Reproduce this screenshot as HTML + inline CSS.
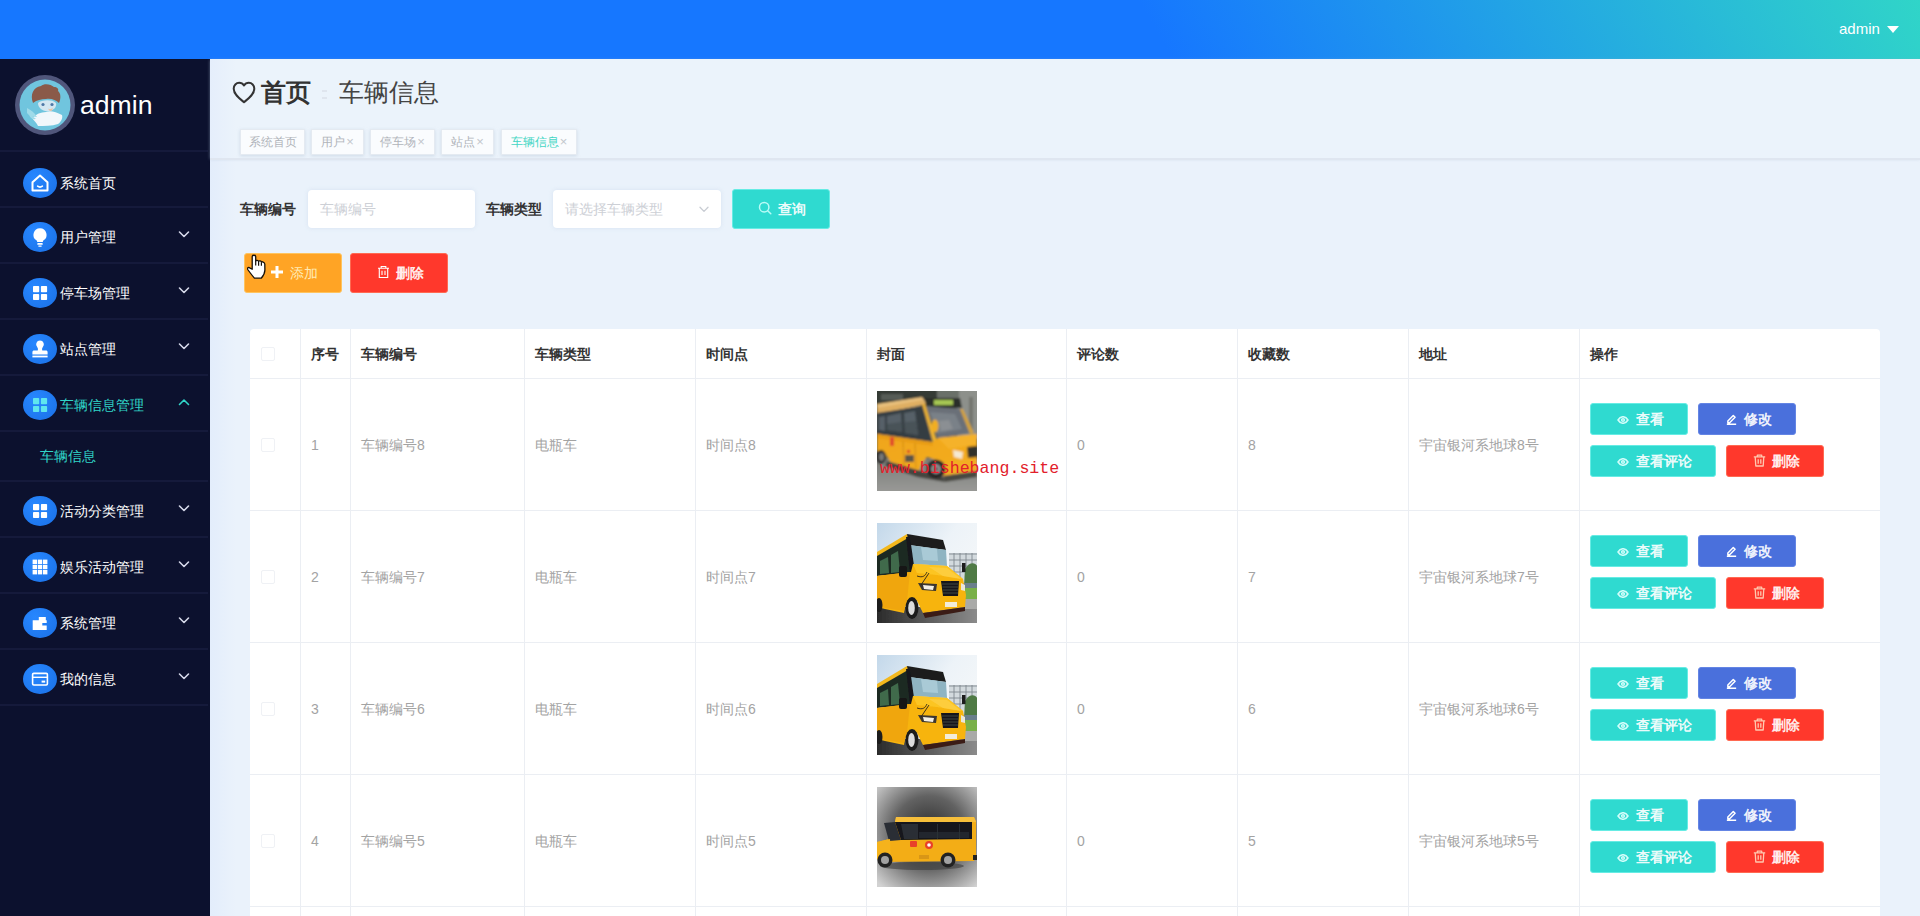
<!DOCTYPE html>
<html lang="zh">
<head>
<meta charset="utf-8">
<title>车辆信息</title>
<style>
*{box-sizing:border-box;margin:0;padding:0}
html,body{width:1920px;height:916px;overflow:hidden}
body{position:relative;background:linear-gradient(90deg,#e3edfb 210px,#eaf2fb 236px);font-family:"Liberation Sans",sans-serif;font-size:14px;color:#333}
.abs{position:absolute}
#header{position:absolute;left:0;top:0;width:1920px;height:59px;background:linear-gradient(60deg,#1677ff 0%,#1677ff 60%,#30d5c8 100%)}
#header .user{position:absolute;left:1839px;top:19px;font-size:15px;color:#fff;line-height:20px}
#header .caret{position:absolute;left:1887px;top:26px;width:0;height:0;border-left:6px solid transparent;border-right:6px solid transparent;border-top:7px solid #fff}
#side{position:absolute;left:0;top:59px;width:210px;height:857px;background:#0c112e;color:#fff}
#side .avatar{position:absolute;left:15px;top:16px;width:60px;height:60px;border-radius:50%;background:#50567b;overflow:hidden}
#side .name{position:absolute;left:80px;top:29px;font-size:26.6px;line-height:34px;color:#fff}
#side .sep{position:absolute;left:0;width:208px;height:2px;background:#151a3b}
#side .item{position:absolute;left:0;width:210px;height:34px}
#side .ico{position:absolute;left:23px;top:2px;width:34px;height:30px;border-radius:50%;background:radial-gradient(circle at 35% 30%,#2787ff,#1a70e6)}
#side .ico svg{position:absolute;left:0;top:-2px}
#side .txt{position:absolute;left:60px;top:7px;font-size:14px;line-height:20px;color:#fff;white-space:nowrap}
#side .chev{position:absolute;left:178px;top:10px}
#side .on .txt{color:#30d5c8}
#side .sub{position:absolute;left:40px;font-size:14px;line-height:20px;color:#30d5c8}
#top{position:absolute;left:210px;top:59px;width:1710px;height:99px;background:linear-gradient(90deg,#e5eefb 0,#ebf3fb 26px);box-shadow:0 1px 3px rgba(170,185,210,.55)}
#crumb{position:absolute;left:232px;top:74px;height:36px;white-space:nowrap}
#crumb .heart{position:absolute;left:0;top:7px}
#crumb .b1{position:absolute;left:29px;top:0;font-size:25px;font-weight:bold;line-height:36px;color:#333}
#crumb .bsep{position:absolute;left:90px;top:16px;width:5px;height:9px;border-top:2px solid #dfe5ee;border-bottom:2px solid #dfe5ee}
#crumb .b2{position:absolute;left:107px;top:0;font-size:25.4px;line-height:36px;color:#444}
#tabs .tab{position:absolute;top:129px;height:26px;background:#fafcfe;border:1px solid #e4eaf1;font-size:12px;line-height:24px;color:#b0b4ba;text-align:center;white-space:nowrap;box-shadow:0 1px 3px rgba(180,195,215,.5)}
#tabs .tab.on{color:#45d6c4}
#tabs .x{font-size:13px;margin-left:1px;color:#c3c7cd}
#tabline{position:absolute;left:210px;top:158px;width:1710px;height:2px;background:#dfe6f0}
.lbl{position:absolute;top:199px;font-size:14px;font-weight:bold;line-height:20px;color:#333}
.inp{position:absolute;top:190px;height:38px;background:#fff;border-radius:4px;font-size:14px;line-height:38px;color:#cdd0d6;padding-left:12px;box-shadow:0 0 4px rgba(200,215,235,.6)}
.btn{position:absolute;color:#fff;font-size:14px;font-weight:700;text-align:center;border-radius:3px;white-space:nowrap;padding-left:2px}
.btn .bi{display:inline-block;vertical-align:middle;margin-right:6px;position:relative;top:-2px}
.btn span{vertical-align:middle;position:relative;top:-1.5px;color:rgba(255,255,255,.93)}
.btn.org span{color:#ffebb5;font-weight:400}
.teal{background:#2fdad0;border:1px solid #66ece4}
.blue{background:#4a70dc;border:1px solid #6485e4}
.red{background:#ff382c;border:1px solid #ff6a52}
.org{background:#ffa425;border:1px solid #ffc45e}
#tbl{position:absolute;left:250px;top:329px;width:1630px;height:587px;background:#fff;border-top-left-radius:4px;border-top-right-radius:4px}
#tbl .v{position:absolute;top:0;width:1px;height:587px;background:#ebeef3}
#tbl .h{position:absolute;left:0;width:1630px;height:1px;background:#ebeef3}
#tbl .th{position:absolute;top:15px;font-size:14px;font-weight:bold;line-height:20px;color:#333;white-space:nowrap}
#tbl .td{position:absolute;font-size:14px;line-height:20px;color:#a3a3a3;white-space:nowrap}
#tbl .cb{position:absolute;left:11px;width:14px;height:14px;border:1px solid #eff1f5;border-radius:2px;background:#fff}
#tbl .pic{position:absolute;left:627px;width:100px;height:100px;overflow:hidden}
#tbl .pic svg{display:block}
#wm{position:absolute;left:880px;top:459px;font-family:"Liberation Mono",monospace;font-size:16.6px;line-height:20px;color:#e2202b;white-space:nowrap}
#cursor{position:absolute;left:247px;top:254px}
</style>
</head>
<body>
<div id="header"><div class="user">admin</div><div class="caret"></div></div>
<div id="side">
<div class="avatar"><svg width="60" height="60" viewBox="0 0 60 60"><defs><filter id="ba"><feGaussianBlur stdDeviation=".7"/></filter></defs><circle cx="30" cy="30" r="25.5" fill="#70c5de"/><g filter="url(#ba)"><path d="M18 28c-3-8 0-16 8-17 3-3 10-2 13 1 3 0 5 2 4 4 3 2 3 8 1 12-3-3-8-5-13-4-5 0-9 1-13 4z" fill="#8a5a4a"/><path d="M23 28c3-3 14-4 18 0 1 4-2 7-7 8-6 1-11-3-11-8z" fill="#d3e6f1"/><circle cx="28" cy="29.5" r="1.6" fill="#4d77a6"/><circle cx="37" cy="29.5" r="1.6" fill="#4d77a6"/><path d="M33 33.5c2 1 4 .500 5-1l-1 3c-1.5.800-3 .500-4-2z" fill="#e9c2a6"/><path d="M17 43c4-4 9-6 14-6 4-2 10 0 16 3 1 3-1 7-4 9-6 2-14 2-20 2-1-3-4-5-6-8z" fill="#f1f7fb"/><path d="M12 33c4 2 8 5 10 9-4 0-8-1-10-4zM14 40c3 1 5 2 7 4-3 .500-5 0-7-4z" fill="#9fdbe9"/></g></svg>
</div>
<div class="name">admin</div>
<div class="sep" style="top:91px"></div>
<div class="sep" style="top:147px"></div>
<div class="sep" style="top:203px"></div>
<div class="sep" style="top:259px"></div>
<div class="sep" style="top:315px"></div>
<div class="sep" style="top:371px"></div>
<div class="sep" style="top:421px"></div>
<div class="sep" style="top:477px"></div>
<div class="sep" style="top:533px"></div>
<div class="sep" style="top:589px"></div>
<div class="sep" style="top:645px"></div>
<div class="item" style="top:107px"><div class="ico"><svg width="34" height="34" viewBox="0 0 34 34"><path d="M9.5 16.2 L17 9.6 L24.5 16.2 V24.6 H9.5 Z" fill="none" stroke="#fff" stroke-width="2" stroke-linejoin="round"/><path d="M14.6 20.2 Q17 22 19.4 20.2" fill="none" stroke="#fff" stroke-width="1.6" stroke-linecap="round"/></svg></div><div class="txt">系统首页</div></div>
<div class="item" style="top:161px"><div class="ico"><svg width="34" height="34" viewBox="0 0 34 34"><path d="M17 8.2a6.6 6.6 0 0 1 3.6 12.1c-.5.4-.8 1-.8 1.7H14.2c0-.7-.3-1.3-.8-1.7A6.6 6.6 0 0 1 17 8.2z" fill="#fff"/><rect x="14.2" y="23" width="5.6" height="1.8" rx=".9" fill="#fff"/><rect x="15.2" y="25.4" width="3.6" height="1.4" rx=".7" fill="#fff"/></svg></div><div class="txt">用户管理</div><svg class="chev" width="12" height="9" viewBox="0 0 12 9"><path d="M1.5 2 6 6.5 10.5 2" fill="none" stroke="#d6d9ea" stroke-width="1.6" stroke-linecap="round" stroke-linejoin="round"/></svg></div>
<div class="item" style="top:217px"><div class="ico"><svg width="34" height="34" viewBox="0 0 34 34"><rect x="10" y="10" width="6.2" height="6.2" rx=".8" fill="#fff"/><rect x="17.9" y="10" width="6.2" height="6.2" rx=".8" fill="#fff"/><rect x="10" y="17.9" width="6.2" height="6.2" rx=".8" fill="#fff"/><rect x="17.9" y="17.9" width="6.2" height="6.2" rx=".8" fill="#fff"/></svg></div><div class="txt">停车场管理</div><svg class="chev" width="12" height="9" viewBox="0 0 12 9"><path d="M1.5 2 6 6.5 10.5 2" fill="none" stroke="#d6d9ea" stroke-width="1.6" stroke-linecap="round" stroke-linejoin="round"/></svg></div>
<div class="item" style="top:273px"><div class="ico"><svg width="34" height="34" viewBox="0 0 34 34"><path d="M17 8.6a3.9 3.9 0 0 1 2.7 6.7c-.6.7-.8 1.5-.6 2.4l.2.9h3.6c1 0 1.7.7 1.7 1.7v2.1H9.4v-2.1c0-1 .7-1.7 1.7-1.7h3.6l.2-.9c.2-.9 0-1.7-.6-2.4A3.9 3.9 0 0 1 17 8.6z" fill="#fff"/><rect x="9.4" y="23.6" width="15.2" height="1.8" fill="#fff"/></svg></div><div class="txt">站点管理</div><svg class="chev" width="12" height="9" viewBox="0 0 12 9"><path d="M1.5 2 6 6.5 10.5 2" fill="none" stroke="#d6d9ea" stroke-width="1.6" stroke-linecap="round" stroke-linejoin="round"/></svg></div>
<div class="item on" style="top:329px"><div class="ico"><svg width="34" height="34" viewBox="0 0 34 34"><rect x="10" y="10" width="6.2" height="6.2" rx=".8" fill="#5fe6ee"/><rect x="17.9" y="10" width="6.2" height="6.2" rx=".8" fill="#5fe6ee"/><rect x="10" y="17.9" width="6.2" height="6.2" rx=".8" fill="#5fe6ee"/><rect x="17.9" y="17.9" width="6.2" height="6.2" rx=".8" fill="#5fe6ee"/></svg></div><div class="txt">车辆信息管理</div><svg class="chev" width="12" height="9" viewBox="0 0 12 9"><path d="M1.5 6.5 6 2 10.5 6.5" fill="none" stroke="#30d5c8" stroke-width="1.6" stroke-linecap="round" stroke-linejoin="round"/></svg></div>
<div class="item" style="top:435px"><div class="ico"><svg width="34" height="34" viewBox="0 0 34 34"><rect x="10" y="10" width="6.2" height="6.2" rx=".8" fill="#fff"/><rect x="17.9" y="10" width="6.2" height="6.2" rx=".8" fill="#fff"/><rect x="10" y="17.9" width="6.2" height="6.2" rx=".8" fill="#fff"/><rect x="17.9" y="17.9" width="6.2" height="6.2" rx=".8" fill="#fff"/></svg></div><div class="txt">活动分类管理</div><svg class="chev" width="12" height="9" viewBox="0 0 12 9"><path d="M1.5 2 6 6.5 10.5 2" fill="none" stroke="#d6d9ea" stroke-width="1.6" stroke-linecap="round" stroke-linejoin="round"/></svg></div>
<div class="item" style="top:491px"><div class="ico"><svg width="34" height="34" viewBox="0 0 34 34"><rect x="9.6" y="9.6" width="4.4" height="4.4" fill="#fff"/><rect x="9.6" y="14.8" width="4.4" height="4.4" fill="#fff"/><rect x="9.6" y="20" width="4.4" height="4.4" fill="#fff"/><rect x="14.8" y="9.6" width="4.4" height="4.4" fill="#fff"/><rect x="14.8" y="14.8" width="4.4" height="4.4" fill="#fff"/><rect x="14.8" y="20" width="4.4" height="4.4" fill="#fff"/><rect x="20" y="9.6" width="4.4" height="4.4" fill="#fff"/><rect x="20" y="14.8" width="4.4" height="4.4" fill="#fff"/><rect x="20" y="20" width="4.4" height="4.4" fill="#fff"/></svg></div><div class="txt">娱乐活动管理</div><svg class="chev" width="12" height="9" viewBox="0 0 12 9"><path d="M1.5 2 6 6.5 10.5 2" fill="none" stroke="#d6d9ea" stroke-width="1.6" stroke-linecap="round" stroke-linejoin="round"/></svg></div>
<div class="item" style="top:547px"><div class="ico"><svg width="34" height="34" viewBox="0 0 34 34"><path d="M9.7 14.3h6.1v-3.4h7v3.4h.9v2.7h-4.4v2.6h4.4v4.4H9.7z" fill="#fff"/></svg></div><div class="txt">系统管理</div><svg class="chev" width="12" height="9" viewBox="0 0 12 9"><path d="M1.5 2 6 6.5 10.5 2" fill="none" stroke="#d6d9ea" stroke-width="1.6" stroke-linecap="round" stroke-linejoin="round"/></svg></div>
<div class="item" style="top:603px"><div class="ico"><svg width="34" height="34" viewBox="0 0 34 34"><rect x="9.6" y="11.4" width="14.8" height="11.6" rx="1.2" fill="none" stroke="#fff" stroke-width="1.6"/><rect x="9.6" y="14.6" width="14.8" height="1.4" fill="#fff"/><rect x="18.6" y="18.6" width="3.6" height="2" fill="#fff"/></svg></div><div class="txt">我的信息</div><svg class="chev" width="12" height="9" viewBox="0 0 12 9"><path d="M1.5 2 6 6.5 10.5 2" fill="none" stroke="#d6d9ea" stroke-width="1.6" stroke-linecap="round" stroke-linejoin="round"/></svg></div>
<div class="sub" style="top:387px">车辆信息</div>
</div>
<div id="main">
<div id="top"></div>
<div id="crumb"><svg class="heart" width="24" height="23" viewBox="0 0 24 23"><path d="M12 21.2C7.5 17.6 1.7 13.3 1.7 7.7 1.7 4.3 4.2 1.8 7.2 1.8c1.9 0 3.7 1 4.8 2.7 1.1-1.7 2.9-2.7 4.8-2.7 3 0 5.5 2.5 5.5 5.9 0 5.6-5.8 9.9-10.3 13.5z" fill="none" stroke="#333" stroke-width="2" stroke-linejoin="round"/></svg><span class="b1">首页</span><span class="bsep"></span><span class="b2">车辆信息</span></div>
<div id="tabs"><div class="tab" style="left:240px;width:65px">系统首页</div><div class="tab" style="left:311px;width:53px">用户<span class="x">×</span></div><div class="tab" style="left:370px;width:65px">停车场<span class="x">×</span></div><div class="tab" style="left:441px;width:53px">站点<span class="x">×</span></div><div class="tab on" style="left:501px;width:76px">车辆信息<span class="x">×</span></div></div><div id="tabline"></div>
<div class="lbl" style="left:240px">车辆编号</div><div class="inp" style="left:308px;width:167px">车辆编号</div>
<div class="lbl" style="left:486px">车辆类型</div><div class="inp" style="left:553px;width:168px">请选择车辆类型<svg class="abs" style="left:146px;top:16px" width="10" height="7" viewBox="0 0 10 7"><path d="M1 1.2 5 5.4 9 1.2" fill="none" stroke="#c8ccd3" stroke-width="1.3" stroke-linecap="round" stroke-linejoin="round"/></svg></div>
<div class="btn teal" style="left:732px;top:189px;width:98px;height:40px;line-height:38px"><svg class="bi" width="14" height="14" viewBox="0 0 14 14"><circle cx="6.2" cy="6.2" r="4.7" fill="none" stroke="#b9fbf7" stroke-width="1.5"/><path d="M9.7 9.7 12.8 12.8" stroke="#b9fbf7" stroke-width="1.5" stroke-linecap="round"/></svg><span>查询</span></div>
<div class="btn org" style="left:244px;top:253px;width:98px;height:40px;line-height:38px"><svg class="bi" width="14" height="14" viewBox="0 0 14 14"><path d="M7 1v12M1 7h12" stroke="#fff" stroke-width="3"/></svg><span>添加</span></div>
<div class="btn red" style="left:350px;top:253px;width:98px;height:40px;line-height:38px"><svg class="bi" width="13" height="14" viewBox="0 0 13 14"><path d="M1 3.2h11M4.2 3.2V1.5h4.6v1.7M2.3 3.2v9.3h8.4V3.2M5 5.8v4.2M8 5.8v4.2" fill="none" stroke="#fff" stroke-width="1.1"/></svg><span>删除</span></div>
<div id="tbl"><div class="v" style="left:50px"></div><div class="v" style="left:100px"></div><div class="v" style="left:274px"></div><div class="v" style="left:445px"></div><div class="v" style="left:616px"></div><div class="v" style="left:816px"></div><div class="v" style="left:987px"></div><div class="v" style="left:1158px"></div><div class="v" style="left:1329px"></div><div class="h" style="top:49px"></div><div class="h" style="top:181px"></div><div class="h" style="top:313px"></div><div class="h" style="top:445px"></div><div class="h" style="top:577px"></div><div class="cb" style="top:18px"></div><div class="th" style="left:61px">序号</div><div class="th" style="left:111px">车辆编号</div><div class="th" style="left:285px">车辆类型</div><div class="th" style="left:456px">时间点</div><div class="th" style="left:627px">封面</div><div class="th" style="left:827px">评论数</div><div class="th" style="left:998px">收藏数</div><div class="th" style="left:1169px">地址</div><div class="th" style="left:1340px">操作</div><div class="cb" style="top:109px"></div><div class="td" style="left:61px;top:106px">1</div><div class="td" style="left:111px;top:106px">车辆编号8</div><div class="td" style="left:285px;top:106px">电瓶车</div><div class="td" style="left:456px;top:106px">时间点8</div><div class="td" style="left:827px;top:106px">0</div><div class="td" style="left:998px;top:106px">8</div><div class="td" style="left:1169px;top:106px">宇宙银河系地球8号</div><div class="pic" style="top:62px"><svg width="100" height="100" viewBox="0 0 100 100"><defs><linearGradient id="g1" x1="0" y1="0" x2="0" y2="1"><stop offset="0" stop-color="#7b7d79"/><stop offset="1" stop-color="#9a9a98"/></linearGradient><linearGradient id="y1" x1="0" y1="0" x2="1" y2="1"><stop offset="0" stop-color="#f0a51a"/><stop offset="1" stop-color="#f4ae22"/></linearGradient><filter id="b1"><feGaussianBlur stdDeviation=".8"/></filter></defs><rect width="100" height="100" fill="#5a5f59"/><g filter="url(#b1)"><rect x="-2" y="-2" width="64" height="17" fill="#343a35"/><rect x="4" y="3" width="22" height="6" fill="#565c56"/><rect x="80" y="-2" width="22" height="50" fill="#8d908b"/><rect x="60" y="-2" width="22" height="12" fill="#6a6f69"/><rect x="92" y="6" width="4" height="36" fill="#73766f"/><rect x="-2" y="68" width="104" height="34" fill="url(#g1)"/><path d="M0 13 45 6 50 13 0 23z" fill="#e9c07c"/><path d="M0 17 46 9 49 13 0 23z" fill="#dfae62"/><path d="M47 7h36l2 10H50z" fill="#2a2e29"/><rect x="57" y="9" width="19" height="5" fill="#a6c652"/><path d="M0 22 46 15 55 51 0 43z" fill="#363d43"/><path d="M2 26 8 25 8 40 2 39zM10 25 24 22 25 41 10 39zM27 22 38 20 41 44 28 42z" fill="#566067"/><path d="M10 33 24 31 25 41 10 39zM28 31 39 30 41 44 28 42z" fill="#4a5359"/><path d="M49 15 83 18 93 42 61 47z" fill="#6a7078"/><path d="M53 21 78 23 85 38 60 42z" fill="#7a8188"/><path d="M62 30 72 29 76 38 64 40z" fill="#8b8f93"/><path d="M45 13 48 13 60 50 56 51z" fill="#eeb232"/><path d="M83 18 86 18 97 42 93 43z" fill="#d3a23c"/><path d="M0 43 55 51 61 47 100 43V80L66 85 62 70 50 66 44 74 42 80 14 72 8 62 0 60z" fill="url(#y1)"/><path d="M61 47 100 43V53L72 58z" fill="#f5b22a"/><path d="M0 43 55 51 56 55 0 47z" fill="#e89c14"/><ellipse cx="58" cy="35" rx="3.5" ry="6.5" fill="#f0ae20"/><path d="M26 50 27 74M38 52 39 77" stroke="#c58410" stroke-width=".8"/><rect x="28" y="64" width="9" height="7" fill="#5a5546"/><rect x="13" y="46" width="4" height="9" fill="#e0482a"/><rect x="30" y="59" width="3" height="3" fill="#d8432a"/><path d="M76 59 86 61 85 68 77 66z" fill="#f5e9d2"/><path d="M90 56 100 55V66L91 67z" fill="#33322c"/><path d="M66 85 100 80V86L68 91z" fill="#4a4943"/><path d="M10 70 44 80 66 86 68 91 40 86 8 75z" fill="#454540"/><circle cx="59" cy="78" r="9.5" fill="#282828"/><circle cx="59" cy="78" r="5" fill="#8d8d8d"/><circle cx="59" cy="78" r="2" fill="#555"/><ellipse cx="4" cy="66" rx="5" ry="7" fill="#2b2b29"/><ellipse cx="4.5" cy="66" rx="2.5" ry="4" fill="#777"/></g></svg>
</div><div class="btn teal" style="left:1340px;top:74px;width:98px;height:32px;line-height:30px"><svg class="bi" width="12" height="8" viewBox="0 0 14 10" style="top:-.5px;margin-left:1px;margin-right:7px"><path d="M.800 5C2.5 2.2 4.6.900 7 .900s4.5 1.3 6.2 4.1C11.5 7.8 9.4 9.1 7 9.1S2.5 7.8.800 5z" fill="none" stroke="#d2fdfa" stroke-width="1.9"/><circle cx="7" cy="5" r="1.7" fill="none" stroke="#d2fdfa" stroke-width="1.9"/></svg><span>查看</span></div><div class="btn blue" style="left:1448px;top:74px;width:98px;height:32px;line-height:30px"><svg class="bi" width="11" height="11" viewBox="0 0 13 13" style="margin-left:1px;margin-right:7px;top:-1px"><path d="M2.2 8.2 8.6 1.8l2.1 2.1-6.4 6.4H2.2zM1 12.2h11" fill="none" stroke="#fff" stroke-width="1.8" stroke-linejoin="round"/></svg><span>修改</span></div><div class="btn teal" style="left:1340px;top:116px;width:126px;height:32px;line-height:30px"><svg class="bi" width="12" height="8" viewBox="0 0 14 10" style="top:-.5px;margin-left:1px;margin-right:7px"><path d="M.800 5C2.5 2.2 4.6.900 7 .900s4.5 1.3 6.2 4.1C11.5 7.8 9.4 9.1 7 9.1S2.5 7.8.800 5z" fill="none" stroke="#d2fdfa" stroke-width="1.9"/><circle cx="7" cy="5" r="1.7" fill="none" stroke="#d2fdfa" stroke-width="1.9"/></svg><span>查看评论</span></div><div class="btn red" style="left:1476px;top:116px;width:98px;height:32px;line-height:30px"><svg class="bi" width="13" height="13" viewBox="0 0 13 13"><path d="M.800 2.8h11.4M4.3 2.8V1.2h4.4v1.6M2.2 2.8l.600 9.2h7.4l.600-9.2M5.2 5.3v4.4M7.8 5.3v4.4" fill="none" stroke="#ffc9b0" stroke-width="1.3" stroke-linejoin="round"/></svg><span>删除</span></div><div class="cb" style="top:241px"></div><div class="td" style="left:61px;top:238px">2</div><div class="td" style="left:111px;top:238px">车辆编号7</div><div class="td" style="left:285px;top:238px">电瓶车</div><div class="td" style="left:456px;top:238px">时间点7</div><div class="td" style="left:827px;top:238px">0</div><div class="td" style="left:998px;top:238px">7</div><div class="td" style="left:1169px;top:238px">宇宙银河系地球7号</div><div class="pic" style="top:194px"><svg width="100" height="100" viewBox="0 0 100 100"><defs><linearGradient id="s2" x1="0" y1="0" x2="1" y2=".7"><stop offset="0" stop-color="#c3d8ea"/><stop offset=".55" stop-color="#edf3f8"/><stop offset="1" stop-color="#f6f8f9"/></linearGradient><linearGradient id="r2" x1="0" y1="0" x2="1" y2="0"><stop offset="0" stop-color="#2b2b2b"/><stop offset="1" stop-color="#8b8b8b"/></linearGradient><filter id="b2"><feGaussianBlur stdDeviation=".75"/></filter></defs><rect width="100" height="100" fill="url(#s2)"/><g filter="url(#b2)"><rect x="72" y="30" width="28" height="34" fill="#d3dade"/><path d="M72 31h28M72 37h28M72 43h28M72 49h28M77 30v34M83 30v34M89 30v34M95 30v34" stroke="#7f888e" stroke-width=".9"/><path d="M88 46c4-7 10-7 12-3v20H87z" fill="#4f7a45"/><rect x="85" y="40" width="3.5" height="9" fill="#1b1d1f"/><rect x="84" y="60" width="16" height="6" fill="#6a7f8c"/><rect x="80" y="65" width="20" height="12" fill="#79b04a"/><rect x="0" y="84" width="100" height="16" fill="url(#r2)"/><path d="M88 76h12v10H84z" fill="#a9aaa8"/><path d="M0 29 30 11 32 15 0 34z" fill="#f3b81a"/><path d="M30 11 66 17 69 27 32 22z" fill="#1d1f1e"/><path d="M32 22 69 27 70 43 36 41z" fill="#8fb4c2"/><path d="M44 24 60 26 61 38 46 37z" fill="#a9cad6"/><path d="M0 33 31 15 34 50 0 53z" fill="#1f2b24"/><path d="M3 38 11 34 12 50 3 51zM14 32 21 28 23 49 14 50z" fill="#3f6b4c"/><path d="M29 14 33 14 38 50 33 51z" fill="#16181a"/><path d="M0 53 34 49 36 41 70 43 86 56 89 72 88 84 46 90 40 78 33 76 28 84 27 90 8 86 0 84z" fill="#f7b40f"/><path d="M36 41 70 43 86 56 60 52 40 50z" fill="#fcc524"/><path d="M52 44 70 45 84 56 66 53z" fill="#fdd04a" opacity=".7"/><path d="M0 53 33 49 30 78 27 88 8 85 0 83z" fill="#f0a60c"/><rect x="22" y="43" width="8" height="11" rx="2" fill="#121416"/><path d="M41 60 60 61 59 68 45 67z" fill="#3a3630"/><path d="M46 62 57 63 56 67 47 66z" fill="#f3efe6"/><path d="M64 58 82 58 81 73 66 73z" fill="#17191a"/><path d="M65 61h16M65.5 64h15.5M66 67h15M66 70h15" stroke="#4b4f52" stroke-width=".8"/><path d="M84 60 88 62 88 68 84 67z" fill="#e9e6dc"/><rect x="68" y="79" width="12" height="5" fill="#f2ecd9"/><path d="M46 90 88 84V88L48 95z" fill="#3a1d16"/><ellipse cx="35" cy="85" rx="6.5" ry="11" fill="#1c1c1c"/><ellipse cx="34.5" cy="85" rx="3.3" ry="7" fill="#dcdcdc"/><ellipse cx="2" cy="82" rx="3.5" ry="7" fill="#1c1c1c"/><path d="M40 53c6 2 8 0 10-4M44 62 52 50" stroke="#2a2417" stroke-width=".9" fill="none"/></g></svg>
</div><div class="btn teal" style="left:1340px;top:206px;width:98px;height:32px;line-height:30px"><svg class="bi" width="12" height="8" viewBox="0 0 14 10" style="top:-.5px;margin-left:1px;margin-right:7px"><path d="M.800 5C2.5 2.2 4.6.900 7 .900s4.5 1.3 6.2 4.1C11.5 7.8 9.4 9.1 7 9.1S2.5 7.8.800 5z" fill="none" stroke="#d2fdfa" stroke-width="1.9"/><circle cx="7" cy="5" r="1.7" fill="none" stroke="#d2fdfa" stroke-width="1.9"/></svg><span>查看</span></div><div class="btn blue" style="left:1448px;top:206px;width:98px;height:32px;line-height:30px"><svg class="bi" width="11" height="11" viewBox="0 0 13 13" style="margin-left:1px;margin-right:7px;top:-1px"><path d="M2.2 8.2 8.6 1.8l2.1 2.1-6.4 6.4H2.2zM1 12.2h11" fill="none" stroke="#fff" stroke-width="1.8" stroke-linejoin="round"/></svg><span>修改</span></div><div class="btn teal" style="left:1340px;top:248px;width:126px;height:32px;line-height:30px"><svg class="bi" width="12" height="8" viewBox="0 0 14 10" style="top:-.5px;margin-left:1px;margin-right:7px"><path d="M.800 5C2.5 2.2 4.6.900 7 .900s4.5 1.3 6.2 4.1C11.5 7.8 9.4 9.1 7 9.1S2.5 7.8.800 5z" fill="none" stroke="#d2fdfa" stroke-width="1.9"/><circle cx="7" cy="5" r="1.7" fill="none" stroke="#d2fdfa" stroke-width="1.9"/></svg><span>查看评论</span></div><div class="btn red" style="left:1476px;top:248px;width:98px;height:32px;line-height:30px"><svg class="bi" width="13" height="13" viewBox="0 0 13 13"><path d="M.800 2.8h11.4M4.3 2.8V1.2h4.4v1.6M2.2 2.8l.600 9.2h7.4l.600-9.2M5.2 5.3v4.4M7.8 5.3v4.4" fill="none" stroke="#ffc9b0" stroke-width="1.3" stroke-linejoin="round"/></svg><span>删除</span></div><div class="cb" style="top:373px"></div><div class="td" style="left:61px;top:370px">3</div><div class="td" style="left:111px;top:370px">车辆编号6</div><div class="td" style="left:285px;top:370px">电瓶车</div><div class="td" style="left:456px;top:370px">时间点6</div><div class="td" style="left:827px;top:370px">0</div><div class="td" style="left:998px;top:370px">6</div><div class="td" style="left:1169px;top:370px">宇宙银河系地球6号</div><div class="pic" style="top:326px"><svg width="100" height="100" viewBox="0 0 100 100"><defs><linearGradient id="s2" x1="0" y1="0" x2="1" y2=".7"><stop offset="0" stop-color="#c3d8ea"/><stop offset=".55" stop-color="#edf3f8"/><stop offset="1" stop-color="#f6f8f9"/></linearGradient><linearGradient id="r2" x1="0" y1="0" x2="1" y2="0"><stop offset="0" stop-color="#2b2b2b"/><stop offset="1" stop-color="#8b8b8b"/></linearGradient><filter id="b2"><feGaussianBlur stdDeviation=".75"/></filter></defs><rect width="100" height="100" fill="url(#s2)"/><g filter="url(#b2)"><rect x="72" y="30" width="28" height="34" fill="#d3dade"/><path d="M72 31h28M72 37h28M72 43h28M72 49h28M77 30v34M83 30v34M89 30v34M95 30v34" stroke="#7f888e" stroke-width=".9"/><path d="M88 46c4-7 10-7 12-3v20H87z" fill="#4f7a45"/><rect x="85" y="40" width="3.5" height="9" fill="#1b1d1f"/><rect x="84" y="60" width="16" height="6" fill="#6a7f8c"/><rect x="80" y="65" width="20" height="12" fill="#79b04a"/><rect x="0" y="84" width="100" height="16" fill="url(#r2)"/><path d="M88 76h12v10H84z" fill="#a9aaa8"/><path d="M0 29 30 11 32 15 0 34z" fill="#f3b81a"/><path d="M30 11 66 17 69 27 32 22z" fill="#1d1f1e"/><path d="M32 22 69 27 70 43 36 41z" fill="#8fb4c2"/><path d="M44 24 60 26 61 38 46 37z" fill="#a9cad6"/><path d="M0 33 31 15 34 50 0 53z" fill="#1f2b24"/><path d="M3 38 11 34 12 50 3 51zM14 32 21 28 23 49 14 50z" fill="#3f6b4c"/><path d="M29 14 33 14 38 50 33 51z" fill="#16181a"/><path d="M0 53 34 49 36 41 70 43 86 56 89 72 88 84 46 90 40 78 33 76 28 84 27 90 8 86 0 84z" fill="#f7b40f"/><path d="M36 41 70 43 86 56 60 52 40 50z" fill="#fcc524"/><path d="M52 44 70 45 84 56 66 53z" fill="#fdd04a" opacity=".7"/><path d="M0 53 33 49 30 78 27 88 8 85 0 83z" fill="#f0a60c"/><rect x="22" y="43" width="8" height="11" rx="2" fill="#121416"/><path d="M41 60 60 61 59 68 45 67z" fill="#3a3630"/><path d="M46 62 57 63 56 67 47 66z" fill="#f3efe6"/><path d="M64 58 82 58 81 73 66 73z" fill="#17191a"/><path d="M65 61h16M65.5 64h15.5M66 67h15M66 70h15" stroke="#4b4f52" stroke-width=".8"/><path d="M84 60 88 62 88 68 84 67z" fill="#e9e6dc"/><rect x="68" y="79" width="12" height="5" fill="#f2ecd9"/><path d="M46 90 88 84V88L48 95z" fill="#3a1d16"/><ellipse cx="35" cy="85" rx="6.5" ry="11" fill="#1c1c1c"/><ellipse cx="34.5" cy="85" rx="3.3" ry="7" fill="#dcdcdc"/><ellipse cx="2" cy="82" rx="3.5" ry="7" fill="#1c1c1c"/><path d="M40 53c6 2 8 0 10-4M44 62 52 50" stroke="#2a2417" stroke-width=".9" fill="none"/></g></svg>
</div><div class="btn teal" style="left:1340px;top:338px;width:98px;height:32px;line-height:30px"><svg class="bi" width="12" height="8" viewBox="0 0 14 10" style="top:-.5px;margin-left:1px;margin-right:7px"><path d="M.800 5C2.5 2.2 4.6.900 7 .900s4.5 1.3 6.2 4.1C11.5 7.8 9.4 9.1 7 9.1S2.5 7.8.800 5z" fill="none" stroke="#d2fdfa" stroke-width="1.9"/><circle cx="7" cy="5" r="1.7" fill="none" stroke="#d2fdfa" stroke-width="1.9"/></svg><span>查看</span></div><div class="btn blue" style="left:1448px;top:338px;width:98px;height:32px;line-height:30px"><svg class="bi" width="11" height="11" viewBox="0 0 13 13" style="margin-left:1px;margin-right:7px;top:-1px"><path d="M2.2 8.2 8.6 1.8l2.1 2.1-6.4 6.4H2.2zM1 12.2h11" fill="none" stroke="#fff" stroke-width="1.8" stroke-linejoin="round"/></svg><span>修改</span></div><div class="btn teal" style="left:1340px;top:380px;width:126px;height:32px;line-height:30px"><svg class="bi" width="12" height="8" viewBox="0 0 14 10" style="top:-.5px;margin-left:1px;margin-right:7px"><path d="M.800 5C2.5 2.2 4.6.900 7 .900s4.5 1.3 6.2 4.1C11.5 7.8 9.4 9.1 7 9.1S2.5 7.8.800 5z" fill="none" stroke="#d2fdfa" stroke-width="1.9"/><circle cx="7" cy="5" r="1.7" fill="none" stroke="#d2fdfa" stroke-width="1.9"/></svg><span>查看评论</span></div><div class="btn red" style="left:1476px;top:380px;width:98px;height:32px;line-height:30px"><svg class="bi" width="13" height="13" viewBox="0 0 13 13"><path d="M.800 2.8h11.4M4.3 2.8V1.2h4.4v1.6M2.2 2.8l.600 9.2h7.4l.600-9.2M5.2 5.3v4.4M7.8 5.3v4.4" fill="none" stroke="#ffc9b0" stroke-width="1.3" stroke-linejoin="round"/></svg><span>删除</span></div><div class="cb" style="top:505px"></div><div class="td" style="left:61px;top:502px">4</div><div class="td" style="left:111px;top:502px">车辆编号5</div><div class="td" style="left:285px;top:502px">电瓶车</div><div class="td" style="left:456px;top:502px">时间点5</div><div class="td" style="left:827px;top:502px">0</div><div class="td" style="left:998px;top:502px">5</div><div class="td" style="left:1169px;top:502px">宇宙银河系地球5号</div><div class="pic" style="top:458px"><svg width="100" height="100" viewBox="0 0 100 100"><defs><radialGradient id="s3" cx="52%" cy="45%" r="72%"><stop offset="0" stop-color="#2c2c2c"/><stop offset=".5" stop-color="#626262"/><stop offset="1" stop-color="#d2d2d2"/></radialGradient><filter id="b3"><feGaussianBlur stdDeviation=".7"/></filter></defs><rect width="100" height="100" fill="url(#s3)"/><g filter="url(#b3)"><ellipse cx="45" cy="79" rx="42" ry="4" fill="#3a3a3a" opacity=".6"/><path d="M19 30 97 30 99 34V70L97 74 4 75 0 72V55L12 52 18 36z" fill="#f3ad16"/><path d="M19 30 97 30 99 35 18 35z" fill="#f7bf3a"/><path d="M7 36 18 35 24 53 12 54z" fill="#2a2e35"/><path d="M18 35 95 35 95 52 24 53z" fill="#15171a"/><path d="M24 37h17v15H27zM60 37h1v15h-1zM82 37h1v15h-1z" fill="#2b2f35"/><path d="M42 45h50v6H42z" fill="#2b3138" opacity=".7"/><path d="M0 55 13 52 14 70 0 70z" fill="#f5b31c"/><rect x="33" y="54" width="7" height="6" rx="1" fill="#e8402a"/><circle cx="52" cy="58" r="4" fill="#e8402a"/><circle cx="52" cy="58" r="1.8" fill="#fff"/><rect x="42" y="68" width="10" height="4" fill="#d99612"/><rect x="96" y="68" width="4" height="5" fill="#222"/><circle cx="8" cy="73" r="7.5" fill="#232323"/><circle cx="8" cy="73" r="4" fill="#a2a2a2"/><circle cx="71" cy="73" r="7.5" fill="#232323"/><circle cx="71" cy="73" r="4" fill="#a2a2a2"/></g></svg>
</div><div class="btn teal" style="left:1340px;top:470px;width:98px;height:32px;line-height:30px"><svg class="bi" width="12" height="8" viewBox="0 0 14 10" style="top:-.5px;margin-left:1px;margin-right:7px"><path d="M.800 5C2.5 2.2 4.6.900 7 .900s4.5 1.3 6.2 4.1C11.5 7.8 9.4 9.1 7 9.1S2.5 7.8.800 5z" fill="none" stroke="#d2fdfa" stroke-width="1.9"/><circle cx="7" cy="5" r="1.7" fill="none" stroke="#d2fdfa" stroke-width="1.9"/></svg><span>查看</span></div><div class="btn blue" style="left:1448px;top:470px;width:98px;height:32px;line-height:30px"><svg class="bi" width="11" height="11" viewBox="0 0 13 13" style="margin-left:1px;margin-right:7px;top:-1px"><path d="M2.2 8.2 8.6 1.8l2.1 2.1-6.4 6.4H2.2zM1 12.2h11" fill="none" stroke="#fff" stroke-width="1.8" stroke-linejoin="round"/></svg><span>修改</span></div><div class="btn teal" style="left:1340px;top:512px;width:126px;height:32px;line-height:30px"><svg class="bi" width="12" height="8" viewBox="0 0 14 10" style="top:-.5px;margin-left:1px;margin-right:7px"><path d="M.800 5C2.5 2.2 4.6.900 7 .900s4.5 1.3 6.2 4.1C11.5 7.8 9.4 9.1 7 9.1S2.5 7.8.800 5z" fill="none" stroke="#d2fdfa" stroke-width="1.9"/><circle cx="7" cy="5" r="1.7" fill="none" stroke="#d2fdfa" stroke-width="1.9"/></svg><span>查看评论</span></div><div class="btn red" style="left:1476px;top:512px;width:98px;height:32px;line-height:30px"><svg class="bi" width="13" height="13" viewBox="0 0 13 13"><path d="M.800 2.8h11.4M4.3 2.8V1.2h4.4v1.6M2.2 2.8l.600 9.2h7.4l.600-9.2M5.2 5.3v4.4M7.8 5.3v4.4" fill="none" stroke="#ffc9b0" stroke-width="1.3" stroke-linejoin="round"/></svg><span>删除</span></div></div>
<div id="wm">www.bishebang.site</div>
<svg id="cursor" width="20" height="27" viewBox="0 0 20 27"><path d="M5.2 2.6C5.2.800 8.7.800 8.7 2.6V7C9.2 6 11.3 6.1 11.6 7.3 12.1 6.6 14.2 6.8 14.4 8 15 7.5 17.4 7.9 17.8 10L17.9 16C17.9 19 16.2 22 14.2 24.2H7.4C5 21.2 2.6 18.2.700 15.5 0 14.3 1 13.2 2.2 13.6L5.2 15.3z" fill="#fff" stroke="#15100a" stroke-width="1.3" stroke-linejoin="round"/><path d="M8.7 7V11.5M11.6 7.5V11.7M14.4 8.2V11.7" stroke="#15100a" stroke-width="1.2" fill="none"/></svg>

</div>
</body>
</html>
